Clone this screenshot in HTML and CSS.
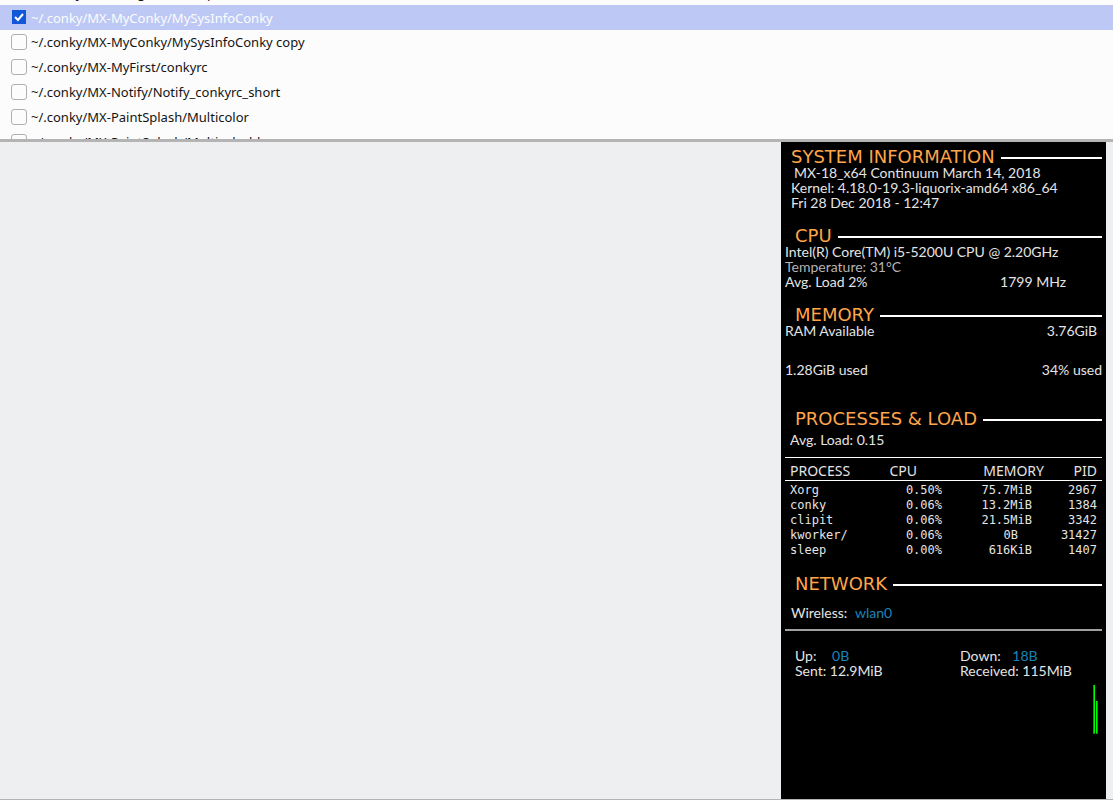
FILE: index.html
```
<!DOCTYPE html>
<html>
  <head>
    <title>Conky Manager</title>
    <meta charset="UTF-8">
    <meta name="viewport" content="width=device-width, initial-scale=1.0">
    <link rel="stylesheet" href="styles.css">
  </head>

  <body>

    <div class="list">
      <ul class="items">
        <li><input type="checkbox" id="c0"><label for="c0">~/.conky/MX-Designs/Desktop</label></li>
        <li class="selected"><input type="checkbox" id="c1" checked><label for="c1">~/.conky/MX-MyConky/MySysInfoConky</label></li>
        <li><input type="checkbox" id="c2"><label for="c2">~/.conky/MX-MyConky/MySysInfoConky copy</label></li>
        <li><input type="checkbox" id="c3"><label for="c3">~/.conky/MX-MyFirst/conkyrc</label></li>
        <li><input type="checkbox" id="c4"><label for="c4">~/.conky/MX-Notify/Notify_conkyrc_short</label></li>
        <li><input type="checkbox" id="c5"><label for="c5">~/.conky/MX-PaintSplash/Multicolor</label></li>
        <li><input type="checkbox" id="c6"><label for="c6">~/.conky/MX-PaintSplash/Multicolorbl</label></li>
      </ul>
    </div>

    <div class="preview">
      <div class="conky">

        <section class="system">
          <h2>SYSTEM INFORMATION</h2>
          <p class="release">MX-18_x64 Continuum March 14, 2018</p>
          <p>Kernel: 4.18.0-19.3-liquorix-amd64 x86_64</p>
          <p>Fri 28 Dec 2018 - 12:47</p>
        </section>

        <section class="cpu">
          <h2>CPU</h2>
          <p>Intel(R) Core(TM) i5-5200U CPU @ 2.20GHz</p>
          <p class="dim">Temperature: 31°C</p>
          <p class="row mhz"><span>Avg. Load 2%</span><span>1799 MHz</span></p>
        </section>

        <section class="memory">
          <h2>MEMORY</h2>
          <p class="row available"><span>RAM Available</span><span>3.76GiB</span></p>
          <p class="row used"><span>1.28GiB used</span><span>34% used</span></p>
        </section>

        <section class="processes">
          <h2>PROCESSES &amp; LOAD</h2>
          <p class="load">Avg. Load: 0.15</p>
          <table>
            <thead>
              <tr><th class="name">PROCESS</th><th class="pct">CPU</th><th class="mem">MEMORY</th><th class="pid">PID</th></tr>
            </thead>
            <tbody>
              <tr><td>Xorg</td><td>0.50%</td><td>75.7MiB</td><td>2967</td></tr>
              <tr><td>conky</td><td>0.06%</td><td>13.2MiB</td><td>1384</td></tr>
              <tr><td>clipit</td><td>0.06%</td><td>21.5MiB</td><td>3342</td></tr>
              <tr><td>kworker/</td><td>0.06%</td><td class="zero">0B</td><td>31427</td></tr>
              <tr><td>sleep</td><td>0.00%</td><td>616KiB</td><td>1407</td></tr>
            </tbody>
          </table>
        </section>

        <section class="network">
          <h2>NETWORK</h2>
          <p class="wireless">Wireless: <span class="blue">wlan0</span></p>
          <div class="traffic">
            <div>
              <p>Up: <span class="blue up">0B</span></p>
              <p>Sent: 12.9MiB</p>
            </div>
            <div>
              <p>Down: <span class="blue down">18B</span></p>
              <p>Received: 115MiB</p>
            </div>
          </div>
          <svg class="graph" width="5" height="49" viewBox="0 0 5 49">
            <path d="M0 0h2v49h-2zM3 16h2v33h-2z" fill="#009900"/>
            <path d="M1 0h1v48h-1zM3 16h1v32h-1z" fill="#00ff00"/>
          </svg>
        </section>

      </div>
    </div>

  </body>
</html>
```
FILE: styles.css
```
* {
  box-sizing: border-box;
}

body {
  margin: 0;
  min-height: 100vh;
  display: flex;
  flex-direction: column;
  background-color: #eeeff1;
  font-family: "Noto Sans", sans-serif;
  font-size: 13px;
}

h2, p, ul {
  margin: 0;
  padding: 0;
}

/* list of conky configs, scrolled part way down */
.list {
  height: 142px;
  flex: none;
  overflow: hidden;
  background-color: #fcfcfc;
  border-bottom: 3px solid #b4b4b4;
}

.items {
  list-style: none;
  margin-top: -20px;
}

.items li {
  display: flex;
  align-items: center;
  height: 25px;
  padding-left: 11px;
  color: #141414;
}

.items label {
  padding-bottom: 2px;
}

.items .selected {
  background-color: #bdc9f4;
  color: #fcfcfc;
}

.items li:first-child label, .items .selected label {
  padding-bottom: 0;
}

.items input {
  appearance: none;
  width: 16px;
  height: 16px;
  margin: 0 4px 2px 0;
  border: 1px solid #b0b0b0;
  border-radius: 3px;
  background-color: #fcfcfc;
}

.items input:checked {
  width: 14px;
  height: 14px;
  margin: 0 5px 2px 1px;
  border: none;
  border-radius: 0;
  background: #1058d8 url("data:image/svg+xml,%3Csvg xmlns='http://www.w3.org/2000/svg' viewBox='0 0 14 14'%3E%3Cpath d='M3 7l3 3 5-6' fill='none' stroke='white' stroke-width='2'/%3E%3C/svg%3E");
}

/* desktop preview */
.preview {
  flex: 1;
  display: flex;
  justify-content: flex-end;
  padding-right: 7px;
  border-bottom: 1px solid #b4b4b4;
}

.conky {
  width: 325px;
  padding: 6px 4px 0;
  background-color: #000;
  color: #e4e4e4;
  font-family: Lato, sans-serif;
  font-size: 14px;
  line-height: 15px;
}

h2 {
  display: flex;
  align-items: center;
  gap: 6px;
  padding-left: 10px;
  color: #ffa54a;
  font-family: "DejaVu Sans", sans-serif;
  font-size: 18px;
  font-weight: normal;
  line-height: 17px;
}

h2::after {
  content: "";
  flex: 1;
  height: 2px;
  margin-top: 3px;
  background-color: #fff;
}

.system {
  padding-left: 6px;
}

.system h2 {
  padding-left: 0;
}

.system .release {
  padding-left: 3px;
}

.cpu, .memory {
  margin-top: 17px;
}

.row {
  display: flex;
  justify-content: space-between;
}

.dim {
  color: #b4b4b4;
}

.mhz {
  padding-right: 36px;
}

.available {
  padding-right: 5px;
}

.used {
  margin-top: 24px;
}

.processes {
  margin-top: 33px;
}

.load {
  padding: 5px 5px 10px;
}

table {
  width: 100%;
  border-collapse: collapse;
  table-layout: fixed;
  border-top: 1px solid #fff;
}

th {
  height: 23px;
  padding: 2px 0 0;
  border-bottom: 1px solid #fff;
  font-family: "Noto Sans", sans-serif;
  font-size: 14px;
  font-weight: normal;
  text-align: right;
}

td {
  height: 15px;
  padding: 0;
  font-family: "DejaVu Sans Mono", monospace;
  font-size: 12px;
  line-height: 15px;
  text-align: right;
}

tbody tr:first-child td {
  height: 17px;
  padding-top: 2px;
}

th:first-child, td:first-child {
  padding-left: 5px;
  text-align: left;
}

th:last-child, td:last-child {
  padding-right: 5px;
}

.name {
  width: 82px;
}

.pct {
  width: 75px;
  padding-right: 25px;
}

.mem {
  width: 102px;
}

td:nth-child(3) {
  padding-right: 12px;
}

td.zero {
  padding-right: 26px;
}

.network {
  margin-top: 17px;
}

.blue {
  margin-left: 4px;
  color: #1a84b8;
}

.up {
  margin-left: 12px;
}

.down {
  margin-left: 8px;
}

.wireless {
  padding: 13px 6px 9px;
  border-bottom: 2px solid #a0a0a0;
}

.traffic {
  display: grid;
  grid-template-columns: 165px 1fr;
  padding: 17px 0 0 10px;
}

.graph {
  display: block;
  margin: 7px 4px 0 auto;
}
```
